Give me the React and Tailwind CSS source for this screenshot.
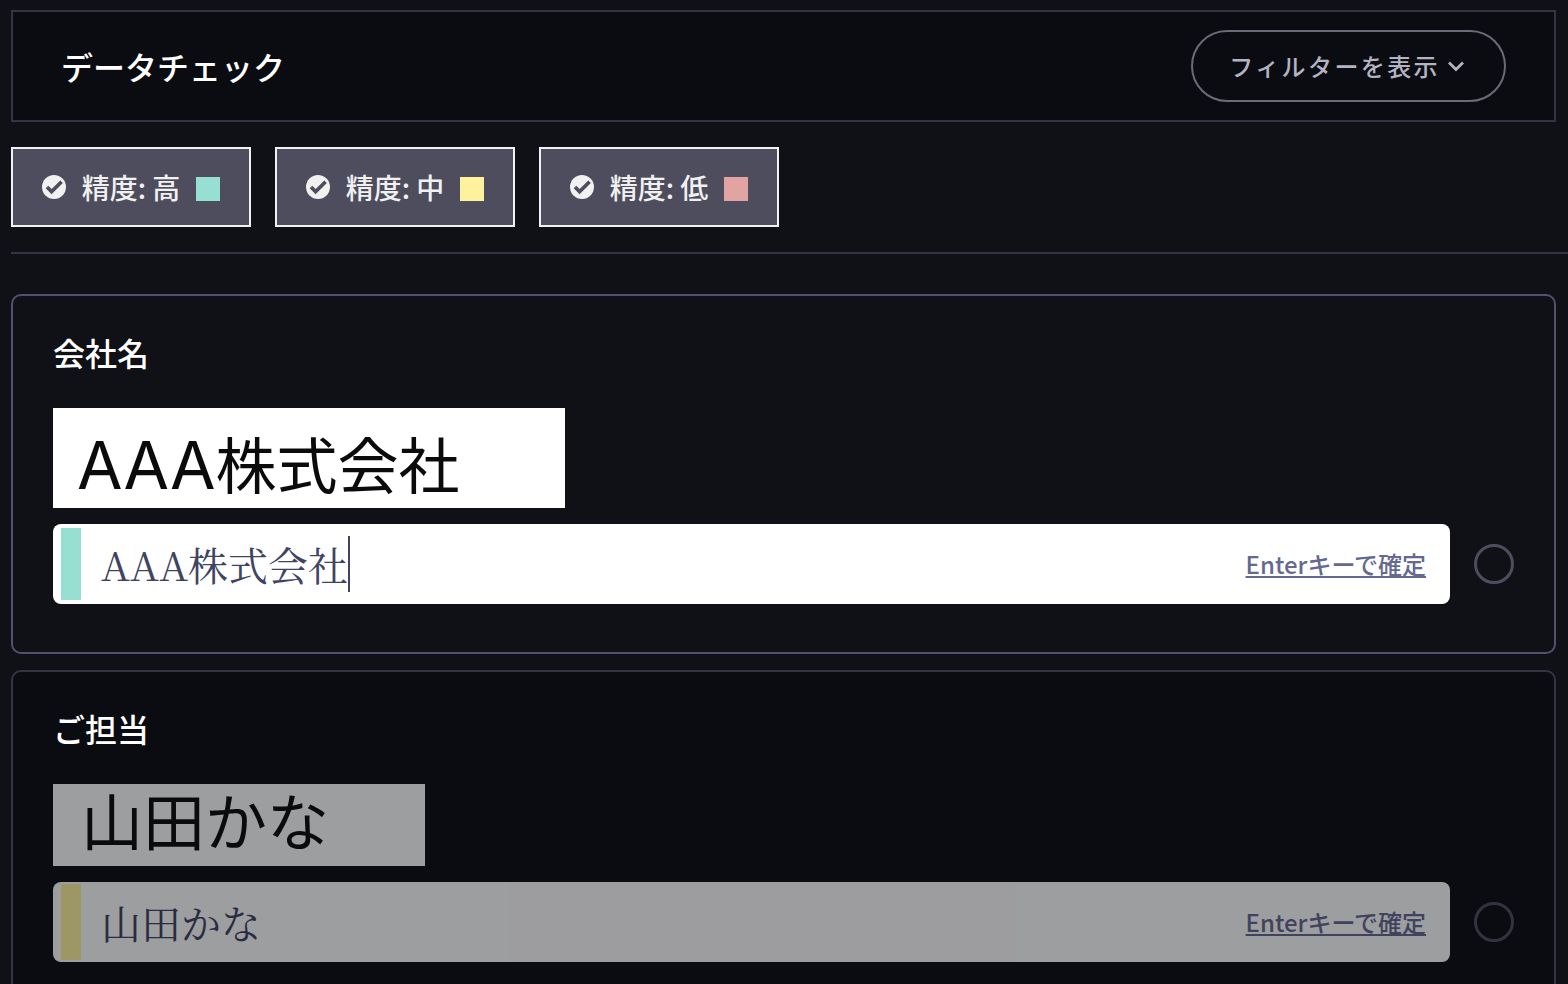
import { useState } from 'react';

const accuracies = [
  { id: 'high', label: '精度: 高', swatch: 'bg-[#97dfd1]' },
  { id: 'middle', label: '精度: 中', swatch: 'bg-[#fff29d]' },
  { id: 'low', label: '精度: 低', swatch: 'bg-[#e2a3a3]' },
];

const fields = [
  {
    id: 'company',
    title: '会社名',
    value: 'AAA株式会社',
    bar: 'my-1 bg-[#97dfd1]',
    active: true,
    scan: (
      <div className="flex h-[100px] w-[512px] items-baseline bg-white pt-6 pl-6 text-[61px] leading-none text-[#0b0b0b]">
        <span className="font-['Inter',sans-serif] text-[66px]">AAA</span>株式会社
      </div>
    ),
  },
  {
    id: 'person',
    title: 'ご担当',
    value: '山田かな',
    bar: 'my-0.5 bg-[#fff29d]',
    active: false,
    scan: (
      <div className="flex h-[82px] w-[372px] items-start bg-white pt-1 pl-7 text-[62px] leading-none text-[#0b0b0b]">
        山田かな
      </div>
    ),
  },
];

const CheckCircle = () => (
  <svg viewBox="0 0 24 24" className="pointer-events-none col-start-1 row-start-1 size-6" aria-hidden="true">
    <circle cx="12" cy="12" r="12" fill="#f1f1f1" />
    <path d="M5 12l4.6 4.6L19.6 6.8" fill="none" stroke="#4d4d5e" strokeWidth="3.6" />
  </svg>
);

const ChevronDown = () => (
  <svg viewBox="0 0 24 24" className="size-6" fill="none" stroke="currentColor" strokeWidth="2.8" aria-hidden="true">
    <path d="M5 8.5l7 7 7-7" />
  </svg>
);

const AccuracyFilter = ({ label, swatch }) => (
  <label className="flex h-20 w-60 cursor-pointer items-center justify-center gap-4 border-2 border-[#f1f1f1] bg-[#4d4d5e] text-[28px] font-medium whitespace-nowrap text-[#f1f1f1]">
    <span className="grid">
      <input type="checkbox" defaultChecked className="col-start-1 row-start-1 size-6 appearance-none rounded-full" />
      <CheckCircle />
    </span>
    {label}
    <span className={`mt-1 size-6 ${swatch}`} />
  </label>
);

const FieldCard = ({ field }) => {
  const [value, setValue] = useState(field.value);

  return (
    <section
      className={`rounded-[10px] border-2 px-10 pt-10 pb-12 ${
        field.active ? 'border-[#50516f] bg-[#101116]' : 'border-[#343443] bg-[#0b0c11]'
      }`}
    >
      <h2 className="text-[32px] leading-8 font-medium text-white">
        <label htmlFor={field.id}>{field.title}</label>
      </h2>
      <div className={`mt-10 flex flex-col gap-4 ${field.active ? '' : 'opacity-60'}`}>
        {field.scan}
        <div className="flex items-center gap-6">
          <div className="flex h-20 min-w-0 flex-1 items-center rounded-lg bg-white pr-6 pl-2">
            <span className={`w-5 self-stretch ${field.bar}`} />
            <div className="flex min-w-0 flex-1 items-center pl-5">
              <input
                id={field.id}
                type="text"
                value={value}
                onChange={(e) => setValue(e.target.value)}
                className="field-sizing-content min-w-0 font-['Noto_Serif_CJK_JP','Noto_Serif_JP','Liberation_Serif','Noto_Sans_CJK_JP',serif] text-[40px] text-[#404462] outline-none"
              />
              {field.active && <span className="h-14 w-0.5 bg-[#404462]" />}
            </div>
            <button type="button" className="text-2xl font-medium whitespace-nowrap text-[#656991] underline decoration-2 underline-offset-2">
              Enterキーで確定
            </button>
          </div>
          <input
            type="checkbox"
            aria-label={`${field.title}を確定`}
            className="size-10 appearance-none rounded-full border-3 border-[#4d4d5e]"
          />
        </div>
      </div>
    </section>
  );
};

export default function App() {
  return (
    <div lang="ja" className="min-h-screen bg-[#101116] pt-[10px] pl-[11px] font-['Noto_Sans_CJK_JP',sans-serif]">
      <header className="mr-3 flex h-28 items-center justify-between border-2 border-[#343443] bg-[#0b0c11] px-12">
        <h1 className="text-[32px] font-medium text-white">データチェック</h1>
        <button
          type="button"
          className="flex h-[72px] items-center gap-1 rounded-full border-2 border-[#6b6b78] px-9 text-2xl font-medium tracking-widest text-[#b3b3c2]"
        >
          フィルターを表示
          <ChevronDown />
        </button>
      </header>

      <div className="flex flex-wrap gap-6 border-b-2 border-[#343443] py-[25px]">
        {accuracies.map((item) => (
          <AccuracyFilter key={item.id} {...item} />
        ))}
      </div>

      <main className="mt-10 mr-3 flex flex-col gap-4">
        {fields.map((field) => (
          <FieldCard key={field.id} field={field} />
        ))}
      </main>
    </div>
  );
}
